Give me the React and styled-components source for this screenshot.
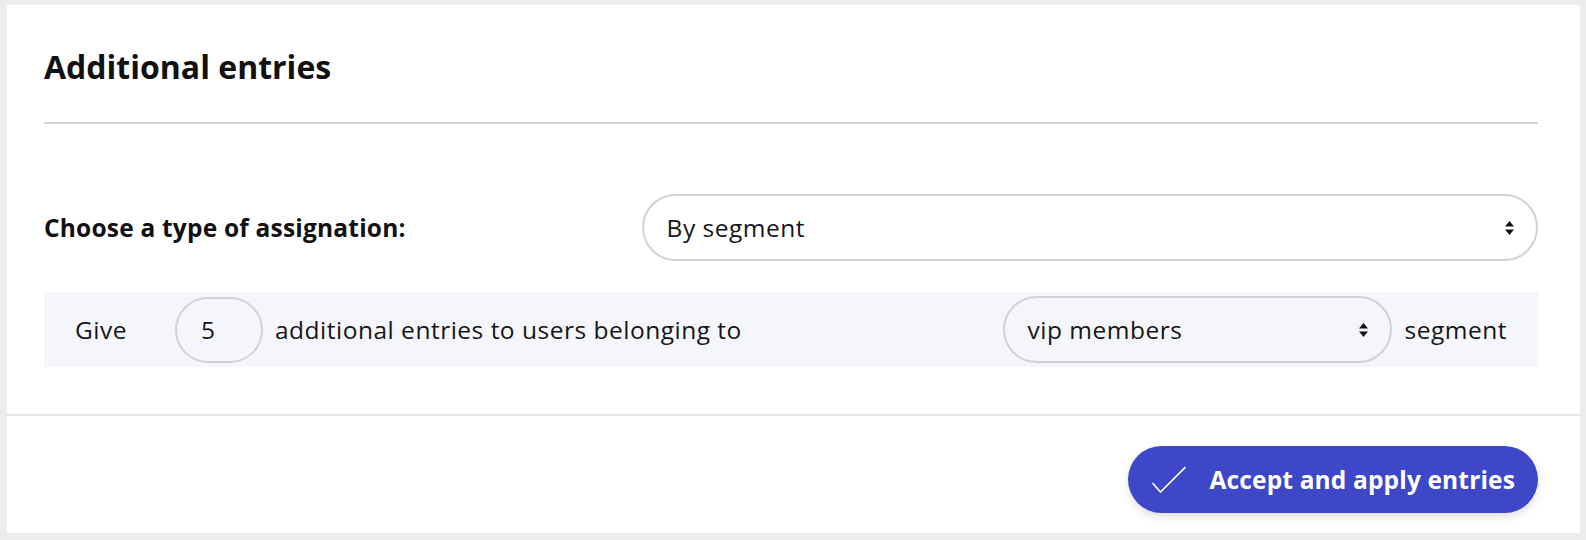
import styled, { createGlobalStyle } from "styled-components";

const GlobalStyle = createGlobalStyle`
  html, body {
    margin: 0;
    padding: 0;
    background: #ececec;
  }

  body {
    font-family: "Open Sans", "Lato", sans-serif;
    color: #141414;
  }
`;

const Frame = styled.div`
  padding: 5px 6px 7px 7px;
`;

const Card = styled.section`
  background: #ffffff;
  display: flex;
  flex-direction: column;
`;

const Body = styled.div`
  padding: 0 42px 47px 37px;
`;

const Header = styled.header`
  padding: 44px 0 37px;
  border-bottom: 2px solid #d3d3d3;
`;

const Title = styled.h2`
  margin: 0;
  font-size: 32px;
  line-height: 36px;
  font-weight: 700;
  color: #111;
`;

const FieldRow = styled.div`
  display: flex;
  align-items: center;
  margin-top: 70px;
`;

const Label = styled.label`
  width: 40%;
  flex-shrink: 0;
  font-size: 24.5px;
  letter-spacing: 0.2px;
  font-weight: 700;
  color: #111;
`;

const SelectBox = styled.div`
  display: flex;
  align-items: center;
  justify-content: space-between;
  box-sizing: border-box;
  height: 67px;
  padding: 0 22px 0 23px;
  border: 2px solid #d2d2d2;
  border-radius: 34px;
  background: transparent;
  font-size: 24.5px;
  letter-spacing: 0.5px;
  color: #161616;
  flex: ${({ $width }) => ($width ? "0 0 auto" : "1")};
  width: ${({ $width }) => ($width ? `${$width}px` : "auto")};
`;

const SegmentRow = styled.div`
  display: flex;
  align-items: center;
  height: 75px;
  margin-top: 31px;
  padding: 0 31px;
  background: #f5f6fb;
  font-size: 24.5px;
  letter-spacing: 0.5px;
  color: #161616;
`;

const Word = styled.span`
  margin-right: ${({ $gap }) => $gap || 0}px;
  white-space: nowrap;
`;

const Filler = styled.span`
  flex: 1;
  white-space: nowrap;
`;

const NumberPill = styled.div`
  box-sizing: border-box;
  width: 88px;
  height: 66px;
  margin-right: 12px;
  padding-left: 24px;
  display: flex;
  align-items: center;
  border: 2px solid #d2d2d2;
  border-radius: 33px;
`;

const Footer = styled.footer`
  display: flex;
  justify-content: flex-end;
  padding: 30px 42px 20px 37px;
  border-top: 2px solid #e6e6e6;
`;

const PrimaryButton = styled.button`
  display: flex;
  align-items: center;
  gap: 24px;
  height: 67px;
  padding: 0 23px 0 24px;
  border: none;
  border-radius: 34px;
  background: #3d47c7;
  color: #fff;
  font-family: inherit;
  font-size: 24.5px;
  letter-spacing: 0.15px;
  font-weight: 700;
  box-shadow: 0 4px 8px rgba(0, 0, 0, 0.12);
  cursor: pointer;
`;

const Arrows = () => (
  <svg width="9" height="14" viewBox="0 0 9 14">
    <path d="M4.5 0 L9 5.5 L0 5.5 Z" fill="#111" />
    <path d="M0 8.5 L9 8.5 L4.5 14 Z" fill="#111" />
  </svg>
);

const Check = () => (
  <svg width="34" height="27" viewBox="0 0 34 27" fill="none">
    <polyline points="0.5,17 8.5,26 33.5,1" stroke="#fff" strokeWidth="1.6" />
  </svg>
);

const App = () => (
  <>
    <GlobalStyle />
    <Frame>
      <Card>
        <Body>
          <Header>
            <Title>Additional entries</Title>
          </Header>

          <FieldRow>
            <Label>Choose a type of assignation:</Label>
            <SelectBox>
              <span>By segment</span>
              <Arrows />
            </SelectBox>
          </FieldRow>

          <SegmentRow>
            <Word $gap={48}>Give</Word>
            <NumberPill>5</NumberPill>
            <Filler>additional entries to users belonging to</Filler>
            <SelectBox $width={389}>
              <span>vip members</span>
              <Arrows />
            </SelectBox>
            <Word style={{ marginLeft: 13 }}>segment</Word>
          </SegmentRow>
        </Body>

        <Footer>
          <PrimaryButton>
            <Check />
            Accept and apply entries
          </PrimaryButton>
        </Footer>
      </Card>
    </Frame>
  </>
);

export default App;
